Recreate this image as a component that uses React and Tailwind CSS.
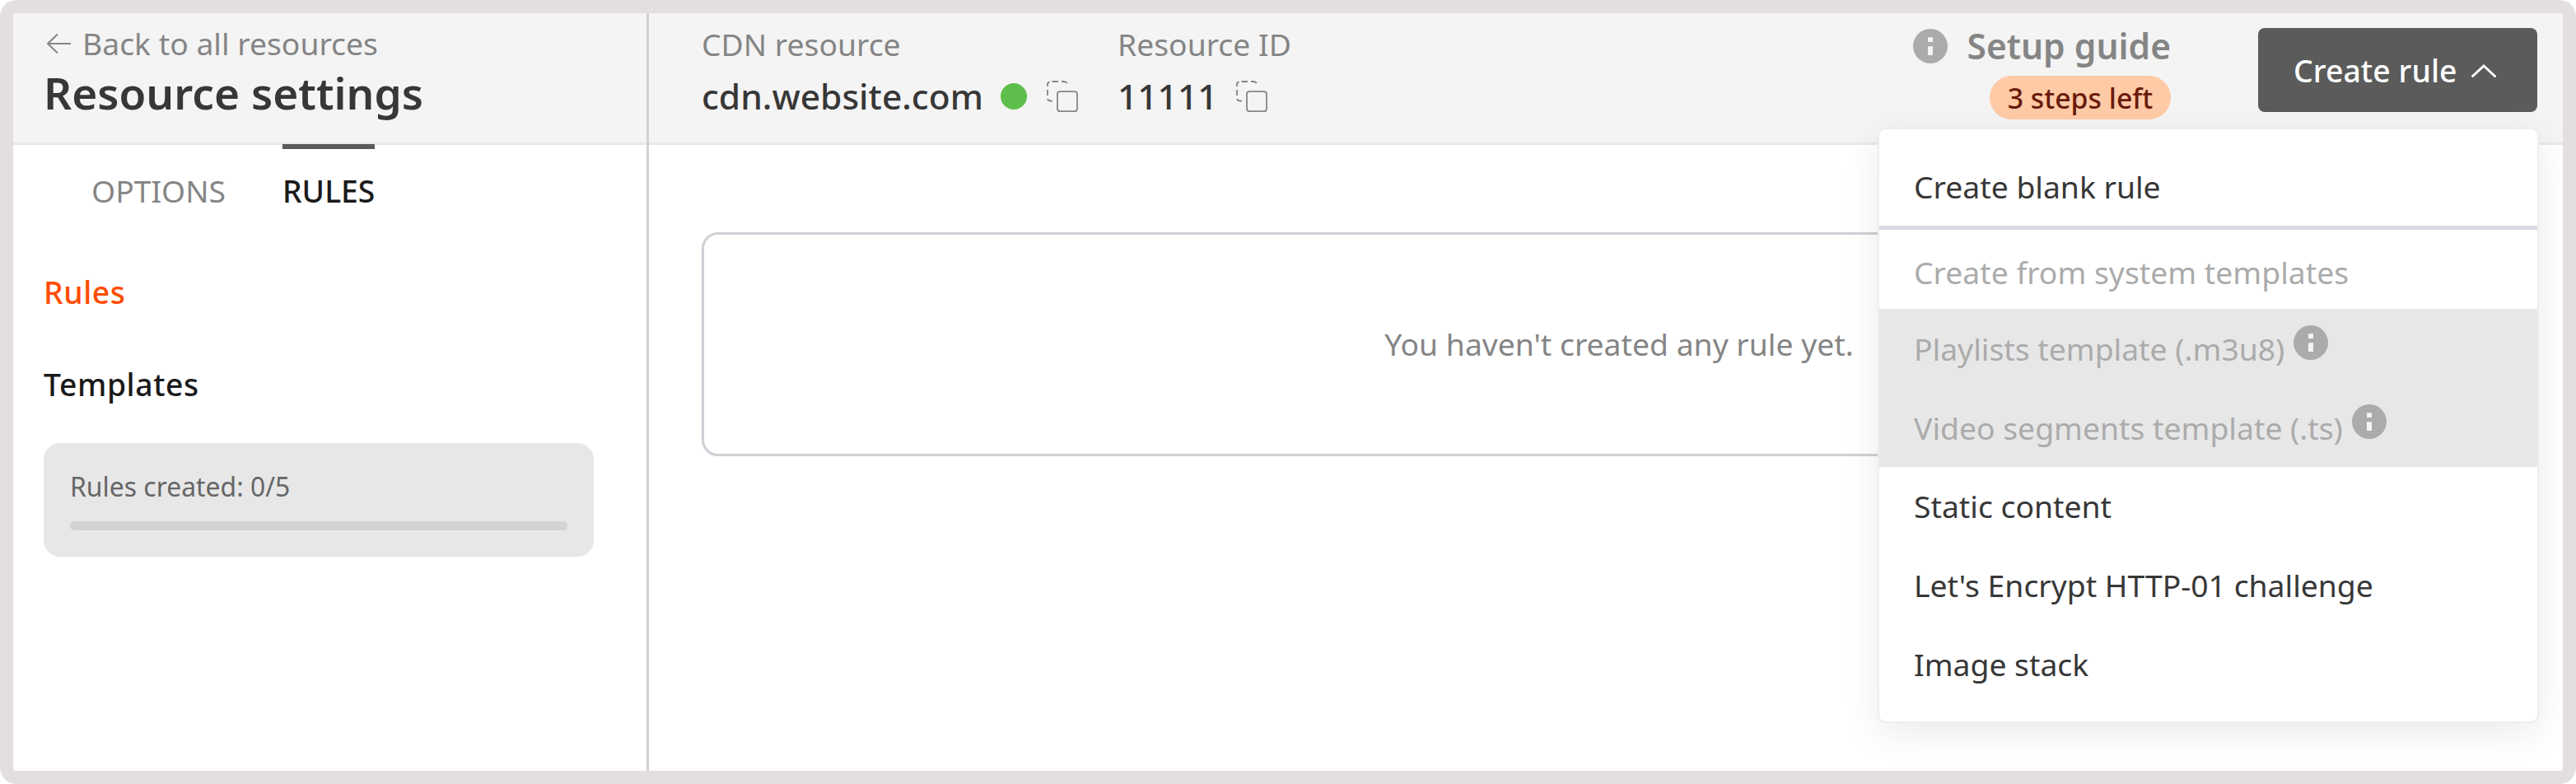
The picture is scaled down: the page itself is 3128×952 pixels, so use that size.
const Info = ({ className }) => (
  <svg className={className} viewBox="0 0 42 42" fill="none">
    <circle cx="21" cy="21" r="21" fill="#ababab" />
    <path d="M18 10.3h6v5.7h-6zM18 21.2h6v10.8h-6z" fill="#f4f4f4" />
  </svg>
);

const Copy = () => (
  <svg className="h-[38px] w-[38px]" viewBox="0 0 38 38" fill="none" stroke="#858585" strokeWidth="1.8">
    <path d="M1 7V4.5Q1 2 3.500 1.500M6.500 1H14M18 1h2.500q3 .2 4.500 2M1 11v7M1 22q.5 2.500 6 2.800" />
    <rect x="13" y="13.2" width="24" height="24" rx="3.2" />
  </svg>
);

const disabled = "flex h-24 items-start bg-[#e7e7e7] pl-[42px] pt-[19px] text-[#ababab]";
const item = "flex h-24 items-center pl-[42px]";

export default function App() {
  return (
    <div className="h-[952px] w-[3128px] overflow-hidden rounded-[20px] bg-[#e3dfde] p-4 font-['Noto_Sans',sans-serif] text-[37.3px] leading-[60px] text-[#373737]">
      <div className="relative flex h-[920px] overflow-hidden rounded bg-white">
        <aside className="flex w-[772px] shrink-0 flex-col border-r-[3px] border-[#d0cfd6]">
          <div className="h-40 border-b-[3px] border-[#e8e8e8] bg-[#f4f4f4] pl-[37px] pt-[7px]">
            <div className="flex items-center gap-[14px] text-[#858585]">
              <svg className="h-6 w-[33px]" viewBox="0 0 33 24" fill="none" stroke="#858585" strokeWidth="2">
                <path d="M33 12H5M17 .5L5 12l12 11.500" />
              </svg>
              Back to all resources
            </div>
            <div className="text-[53.2px] font-semibold">Resource settings</div>
          </div>
          <nav className="flex gap-[69px] pl-[95px]">
            <div className="pt-[26px] text-[#858585]">OPTIONS</div>
            <div className="-mt-px border-t-[6px] border-[#5b5b5b] pt-[21px] font-medium text-[#1a1a1a]">RULES</div>
          </nav>
          <div className="pl-[37px] pt-[63px] font-medium tracking-[0.6px] text-[#ff4c00]">Rules</div>
          <div className="pl-[37px] pt-[52px] font-medium tracking-[0.6px] text-[#1a1a1a]">Templates</div>
          <div className="ml-[37px] mt-[41px] h-[138px] w-[668px] rounded-[20px] bg-[#e7e7e7] px-8 pt-[23px] text-[31.9px] text-[#666]">
            Rules created: 0/5
            <div className="mt-3 h-[11px] rounded-full bg-[#d3d3d3]" />
          </div>
        </aside>
        <main className="flex-1">
          <header className="flex h-40 items-start border-b-[3px] border-[#e8e8e8] bg-[#f4f4f4] pl-16">
            <div className="w-[505px] pt-2">
              <div className="text-[#858585]">CDN resource</div>
              <div className="mt-[3px] flex items-center text-[42.5px] font-medium">
                cdn.website.com
                <span className="ml-[21px] mr-6 h-8 w-8 rounded-full bg-[#5ebe4b]" />
                <Copy />
              </div>
            </div>
            <div className="pt-2">
              <div className="text-[#858585]">Resource ID</div>
              <div className="mt-[3px] flex items-center gap-[22px] text-[42.5px] font-medium">
                11111
                <Copy />
              </div>
            </div>
            <div className="ml-auto flex flex-col items-end pt-[10px] text-[42.5px] font-semibold text-[#858585]">
              <div className="flex items-center gap-6"><Info className="h-[42px] w-[42px]" />Setup guide</div>
              <div className="mt-[6px] flex h-[53px] w-[220px] items-center justify-center rounded-full bg-[#ffcaa6] text-[33.8px] font-medium text-[#691b0c]">3 steps left</div>
            </div>
            <button className="ml-[106px] mr-[31px] mt-[18px] flex h-[102px] w-[339px] items-center gap-[17px] rounded-lg bg-[#5b5b5b] pl-[43px] pt-px font-medium tracking-[0.1px] text-white">
              Create rule
              <svg className="h-4 w-[30px]" viewBox="0 0 30 16" fill="none" stroke="#fff" strokeWidth="3" strokeLinecap="round"><path d="M1.500 14.500L15 2l13.500 12.500" /></svg>
            </button>
          </header>
          <div className="ml-16 mr-8 mt-[106px] flex h-[272px] items-center justify-center rounded-[20px] border-[3px] border-[#d0cfd6] text-[#858585]">You haven't created any rule yet.</div>
        </main>
        <div className="absolute right-[31px] top-[141px] h-[719px] w-[799px] rounded-lg bg-white shadow-[0_0_0_2px_#eeeeee,0_12px_48px_rgba(0,0,0,0.09)]">
          <div className="flex h-[122px] items-center border-b-[5px] border-[#ded9e3] pl-[42px] pt-[22px]">Create blank rule</div>
          <div className="h-[96px] pl-[42px] pt-[22px] text-[#ababab]">Create from system templates</div>
          <div className={disabled}>Playlists template (.m3u8)<Info className="ml-[11px] mt-px h-[42px] w-[42px]" /></div>
          <div className={disabled}>Video segments template (.ts)<Info className="ml-[11px] mt-px h-[42px] w-[42px]" /></div>
          <div className={item}>Static content</div>
          <div className={item}>Let's Encrypt HTTP-01 challenge</div>
          <div className={item}>Image stack</div>
        </div>
      </div>
    </div>
  );
}
